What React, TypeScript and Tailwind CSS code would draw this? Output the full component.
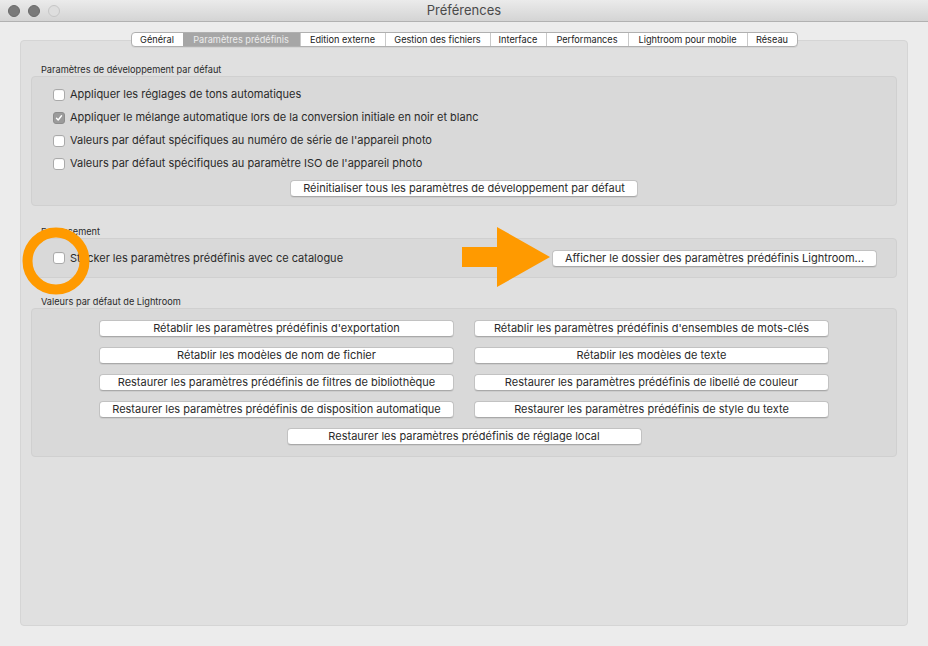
import React from "react";

const font = { fontFamily: 'Inter, "Liberation Sans", Arial, sans-serif' };

function Checkbox({ checked = false }: { checked?: boolean }) {
  if (checked) {
    return (
      <div className="w-[12px] h-[12px] rounded-[3px] bg-[#9b9b9b] border border-[#8c8c8c] flex items-center justify-center shrink-0">
        <svg width="8" height="8" viewBox="0 0 8 8">
          <path d="M1.5 4.2 L3.2 6 L6.5 1.8" fill="none" stroke="#ffffff" strokeWidth="1.4" strokeLinecap="round" strokeLinejoin="round" />
        </svg>
      </div>
    );
  }
  return <div className="w-[12px] h-[12px] rounded-[3px] bg-white border border-[#aaaaaa] shadow-[inset_0_1px_0_rgba(0,0,0,0.04)] shrink-0" />;
}

function CheckRow({ label, checked }: { label: string; checked?: boolean }) {
  return (
    <div className="h-[23px] flex items-center gap-[5px] pl-[21px]">
      <Checkbox checked={checked} />
      <span className="text-[11px] text-[#2a2a2a] leading-none">{label}</span>
    </div>
  );
}

function Btn({ label, className = "" }: { label: string; className?: string }) {
  return (
    <div
      className={
        "h-[17px] bg-white border border-[#c2c2c2] border-b-[#a9a9a9] rounded-[4px] flex items-center justify-center text-[11px] text-[#2a2a2a] leading-none shadow-[0_1px_0_rgba(0,0,0,0.06)] " +
        className
      }
    >
      {label}
    </div>
  );
}

function SectionLabel({ text }: { text: string }) {
  return <div className="h-[12px] pl-[10px] text-[9.2px] leading-[12px] text-[#2a2a2a]">{text}</div>;
}

const tabs: [string, number][] = [
  ["Général", 52],
  ["Paramètres prédéfinis", 117],
  ["Edition externe", 85],
  ["Gestion des fichiers", 105],
  ["Interface", 56],
  ["Performances", 82],
  ["Lightroom pour mobile", 119],
  ["Réseau", 50],
];

export default function App() {
  return (
    <div className="w-[928px] h-[646px] bg-[#ececec] relative overflow-hidden" style={font}>
      {/* title bar */}
      <div className="h-[22px] bg-gradient-to-b from-[#ebebeb] to-[#d4d4d4] border-b border-[#b1b1b1] relative flex items-center pl-[8px] gap-[8px]">
        <div className="w-[12px] h-[12px] rounded-full bg-[#7a7a7a] border border-[#6a6a6a]" />
        <div className="w-[12px] h-[12px] rounded-full bg-[#7a7a7a] border border-[#6a6a6a]" />
        <div className="w-[12px] h-[12px] rounded-full bg-[#dedede] border border-[#c6c6c6]" />
        <div className="absolute inset-0 flex items-center justify-center text-[13px] text-[#4a4a4a]">Préférences</div>
      </div>

      {/* tabs */}
      <div className="flex justify-center mt-[10px] relative z-10">
        <div className="flex h-[15px] border border-[#b0b0b0] rounded-[4px] bg-white overflow-hidden shadow-[0_1px_0_rgba(0,0,0,0.05)]">
          {tabs.map(([t, w], i) => (
            <div
              key={t}
              style={{ width: w - (i === 0 ? 1 : 0) }}
              className={
                "flex items-center justify-center text-[9.2px] leading-none " +
                (i === 1
                  ? "bg-[#a6a6a6] text-[#ededed]"
                  : "text-[#222222] " + (i > 1 ? "border-l border-[#c9c9c9]" : ""))
              }
            >
              {t}
            </div>
          ))}
        </div>
      </div>

      {/* tab box */}
      <div className="mx-[20px] -mt-[7px] h-[586px] bg-[#e0e0e0] border border-[#d5d5d5] rounded-[4px] px-[10px] pt-[23px]">
        <SectionLabel text="Paramètres de développement par défaut" />
        <div className="bg-[#d9d9d9] border border-[#d0d0d0] rounded-[4px] pt-[6px] pb-[8px]">
          <CheckRow label="Appliquer les réglages de tons automatiques" />
          <CheckRow label="Appliquer le mélange automatique lors de la conversion initiale en noir et blanc" checked />
          <CheckRow label="Valeurs par défaut spécifiques au numéro de série de l'appareil photo" />
          <CheckRow label="Valeurs par défaut spécifiques au paramètre ISO de l'appareil photo" />
          <div className="flex justify-center mt-[5px]">
            <Btn label="Réinitialiser tous les paramètres de développement par défaut" className="w-[348px]" />
          </div>
        </div>

        <div className="mt-[20px]">
          <SectionLabel text="Emplacement" />
        </div>
        <div className="bg-[#d9d9d9] border border-[#d0d0d0] rounded-[4px] h-[40px] flex items-center pr-[19px]">
          <CheckRow label="Stocker les paramètres prédéfinis avec ce catalogue" />
          <Btn label="Afficher le dossier des paramètres prédéfinis Lightroom..." className="w-[325px] ml-auto" />
        </div>

        <div className="mt-[18px]">
          <SectionLabel text="Valeurs par défaut de Lightroom" />
        </div>
        <div className="bg-[#d9d9d9] border border-[#d0d0d0] rounded-[4px] pt-[11px] pb-[11px] flex flex-col items-center gap-[10px]">
          <div className="grid grid-cols-[355px_355px] gap-x-[20px] gap-y-[10px]">
            <Btn label="Rétablir les paramètres prédéfinis d'exportation" />
            <Btn label="Rétablir les paramètres prédéfinis d'ensembles de mots-clés" />
            <Btn label="Rétablir les modèles de nom de fichier" />
            <Btn label="Rétablir les modèles de texte" />
            <Btn label="Restaurer les paramètres prédéfinis de filtres de bibliothèque" />
            <Btn label="Restaurer les paramètres prédéfinis de libellé de couleur" />
            <Btn label="Restaurer les paramètres prédéfinis de disposition automatique" />
            <Btn label="Restaurer les paramètres prédéfinis de style du texte" />
          </div>
          <Btn label="Restaurer les paramètres prédéfinis de réglage local" className="w-[355px]" />
        </div>
      </div>

      {/* orange annotations */}
      <svg className="absolute left-[20px] top-[225px]" width="72" height="72" viewBox="0 0 72 72">
        <circle cx="36" cy="36" r="28.5" fill="none" stroke="#ff9a00" strokeWidth="10" />
      </svg>
      <svg className="absolute left-[460px] top-[225px]" width="92" height="64" viewBox="0 0 92 64">
        <polygon points="2,22 37,22 37,2 90,32 37,62 37,42 2,42" fill="#ff9a00" />
      </svg>
    </div>
  );
}
